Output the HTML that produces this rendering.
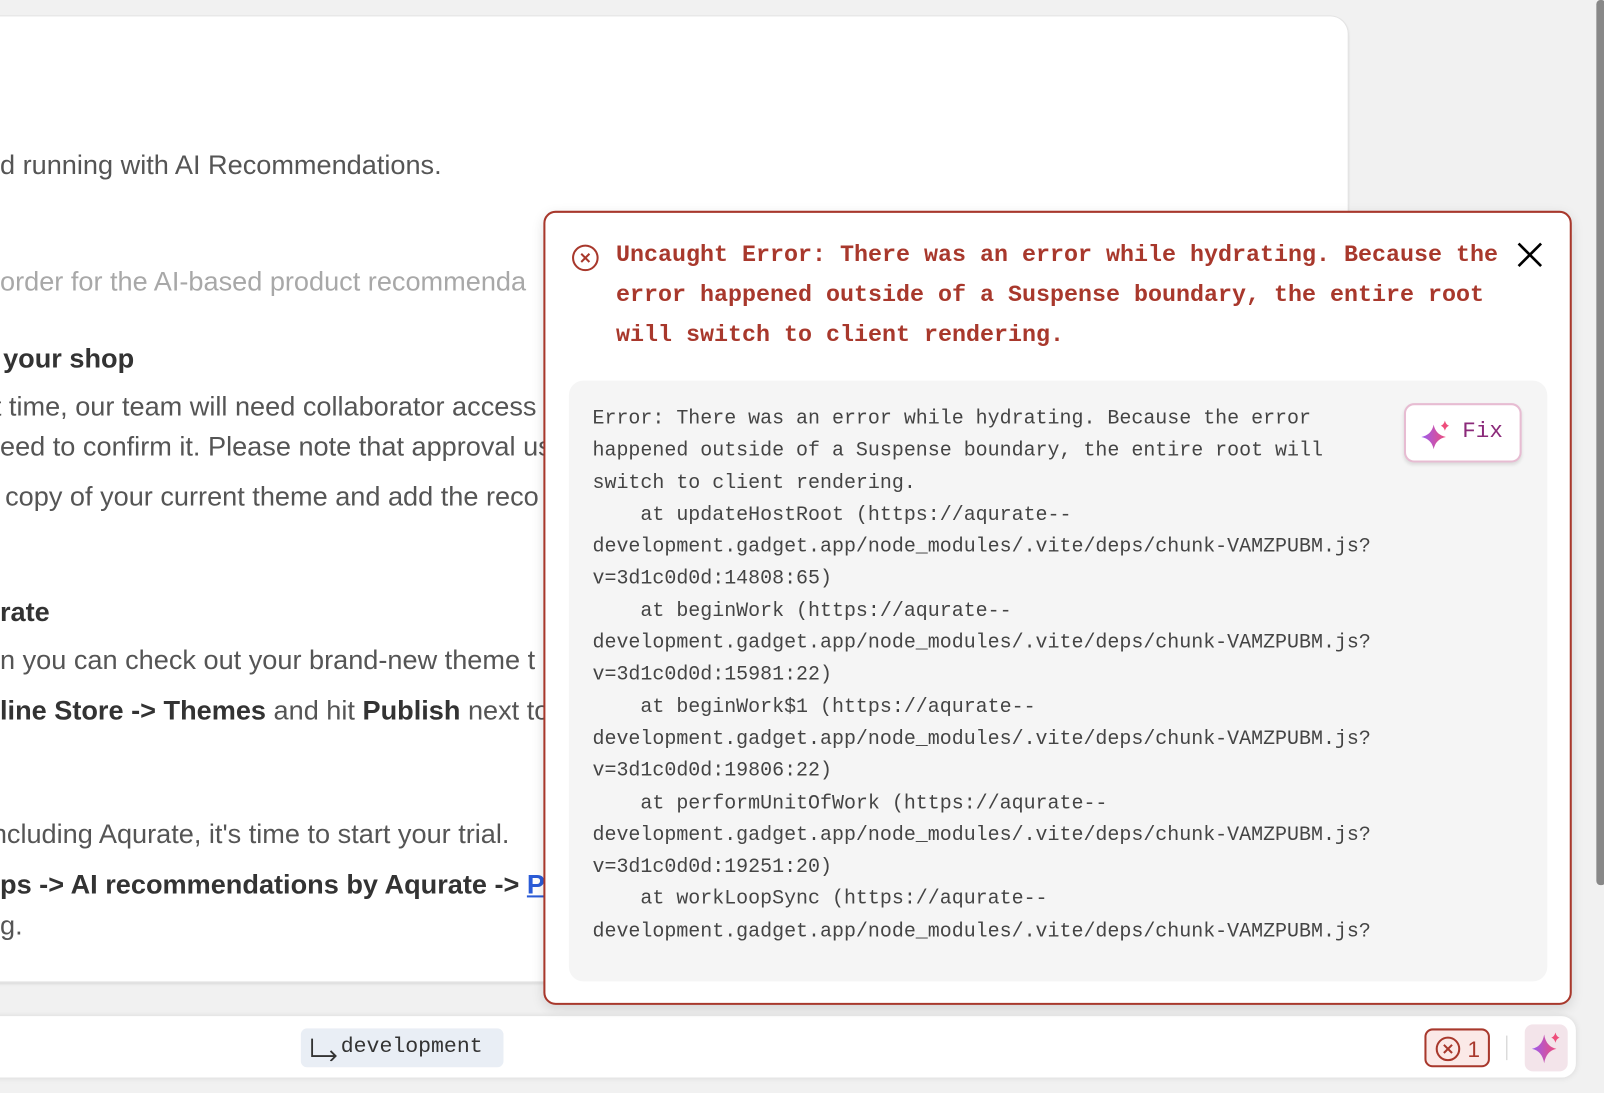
<!DOCTYPE html>
<html><head><meta charset="utf-8"><style>
*{margin:0;padding:0;box-sizing:border-box}
body{width:1604px;height:1092px;background:#f1f1f1;position:relative;overflow:hidden;font-family:"Liberation Sans",sans-serif}
.wrap{position:absolute;left:0;top:0;width:1568px;height:1068px;transform:scale(1.0233);transform-origin:0 0}
.card{position:absolute;left:-20px;top:15px;width:1338px;height:945px;background:#fff;border:1px solid #e3e3e3;border-radius:0 18px 0 0;box-shadow:0 2px 2px rgba(0,0,0,.08)}
.t{position:absolute;left:0;font-size:26.5px;color:#555;white-space:nowrap}
.b{font-weight:bold;color:#333}
.scroll{position:absolute;left:1560px;top:0;width:9px;height:865px;background:#888;border-radius:4px}
.bar{position:absolute;left:-20px;top:993px;width:1560px;height:60px;background:#fff;border-radius:0 14px 14px 0;box-shadow:0 0 6px rgba(0,0,0,.1)}
.panel{position:absolute;left:531px;top:206px;width:1005px;height:776px;background:#fff;border:2px solid #a8382c;border-radius:12px;box-shadow:0 4px 12px rgba(0,0,0,.12)}
.title{position:absolute;left:69px;top:22px;font-family:"Liberation Mono",monospace;font-weight:bold;font-size:22.8px;line-height:39px;color:#a8382c;white-space:pre}
.code{position:absolute;left:23px;top:164px;width:956px;height:587px;background:#f5f5f5;border-radius:14px;overflow:hidden}
.code pre{position:absolute;left:23px;top:22px;font-family:"Liberation Mono",monospace;font-size:19.5px;line-height:31.3px;color:#444}
.fix{position:absolute;left:816px;top:22px;width:115px;height:58px;background:#fff;border:2px solid #e7bcd2;border-radius:10px;box-shadow:0 2px 3px rgba(0,0,0,.1);font-family:"Liberation Mono",monospace;font-size:22px;color:#8b2a7a;padding:13px 0 0 55px}
</style></head><body>
<div class="wrap">
<div class="scroll"></div>
<div class="card"></div>
<div class="t" style="top:146px">d running with AI Recommendations.</div>
<div class="t" style="top:260px;color:#a8a8a8">order for the AI-based product recommenda</div>
<div class="t b" style="top:335px;left:3px">your shop</div>
<div class="t" style="top:382px;left:-6px">t time, our team will need collaborator access</div>
<div class="t" style="top:421px">eed to confirm it. Please note that approval us</div>
<div class="t" style="top:470px;left:5px">copy of your current theme and add the reco</div>
<div class="t b" style="top:583px">rate</div>
<div class="t" style="top:630px">n you can check out your brand-new theme t</div>
<div class="t" style="top:679px"><span class="b">line Store -&gt; Themes</span> and hit <span class="b">Publish</span> next to</div>
<div class="t" style="top:800px;left:-8px">ncluding Aqurate, it's time to start your trial.</div>
<div class="t b" style="top:849px">ps -&gt; AI recommendations by Aqurate -&gt; <span style="color:#2a5bd7;text-decoration:underline">P</span></div>
<div class="t" style="top:889px">g.</div>
<div class="bar"></div>
<div style="position:absolute;left:294px;top:1005px;width:198px;height:38px;background:#e9eef5;border-radius:6px;font-family:'Liberation Mono',monospace;font-size:21px;color:#333;padding:7px 0 0 39px"><svg style="position:absolute;left:9px;top:8px" width="28" height="24" viewBox="0 0 28 24"><path d="M2 2V19H25M20 14l5 5-5 5" fill="none" stroke="#333" stroke-width="1.8"/></svg>development</div>
<div style="position:absolute;left:1392px;top:1005px;width:64px;height:38px;border:2px solid #a8382c;background:#fbe9e7;border-radius:8px;color:#a8382c;font-size:22px;padding:5px 0 0 8px"><svg width="26" height="26" viewBox="0 0 26 26" style="vertical-align:-5px"><circle cx="13" cy="13" r="11" fill="none" stroke="#a8382c" stroke-width="2"/><path d="M9 9l8 8M17 9l-8 8" stroke="#a8382c" stroke-width="2"/></svg> 1</div>
<div style="position:absolute;left:1472px;top:1012px;width:1px;height:24px;background:#ccc"></div>
<div style="position:absolute;left:1490px;top:1001px;width:42px;height:46px;background:#f3e4ea;border-radius:8px"><svg width="42" height="46" viewBox="0 0 42 46"><defs><linearGradient id="g2" x1="0" x2="1"><stop offset="0" stop-color="#9b5cf0"/><stop offset="1" stop-color="#ee4d7b"/></linearGradient></defs><path d="M19 10 Q21 22 31 24 Q21 26 19 38 Q17 26 7 24 Q17 22 19 10Z" fill="url(#g2)"/><path d="M30 8 Q31 12 34 13 Q31 14 30 18 Q29 14 26 13 Q29 12 30 8Z" fill="#ee4d7b"/></svg></div>
<div class="panel">
<svg style="position:absolute;left:25px;top:30px" width="28" height="28" viewBox="0 0 28 28"><circle cx="14" cy="14" r="12" fill="none" stroke="#a8382c" stroke-width="2"/><path d="M10 10l8 8M18 10l-8 8" stroke="#a8382c" stroke-width="2"/></svg>
<div class="title">Uncaught Error: There was an error while hydrating. Because the
error happened outside of a Suspense boundary, the entire root
will switch to client rendering.</div>
<svg style="position:absolute;left:949px;top:28px" width="26" height="26" viewBox="0 0 26 26"><path d="M2 2l22 22M24 2L2 24" stroke="#000" stroke-width="2.6"/></svg>
<div class="code"><pre>Error: There was an error while hydrating. Because the error
happened outside of a Suspense boundary, the entire root will
switch to client rendering.
    at updateHostRoot (https://aqurate--
development.gadget.app/node_modules/.vite/deps/chunk-VAMZPUBM.js?
v=3d1c0d0d:14808:65)
    at beginWork (https://aqurate--
development.gadget.app/node_modules/.vite/deps/chunk-VAMZPUBM.js?
v=3d1c0d0d:15981:22)
    at beginWork$1 (https://aqurate--
development.gadget.app/node_modules/.vite/deps/chunk-VAMZPUBM.js?
v=3d1c0d0d:19806:22)
    at performUnitOfWork (https://aqurate--
development.gadget.app/node_modules/.vite/deps/chunk-VAMZPUBM.js?
v=3d1c0d0d:19251:20)
    at workLoopSync (https://aqurate--
development.gadget.app/node_modules/.vite/deps/chunk-VAMZPUBM.js?</pre>
<div class="fix"><svg style="position:absolute;left:14px;top:13px" width="32" height="32" viewBox="0 0 32 32"><defs><linearGradient id="g1" x1="0" x2="1"><stop offset="0" stop-color="#9b5cf0"/><stop offset="1" stop-color="#ee4d7b"/></linearGradient></defs><path d="M13 6 Q15 16 25 18 Q15 20 13 30 Q11 20 1 18 Q11 16 13 6Z" fill="url(#g1)"/><path d="M24 2 Q25 6 28 7 Q25 8 24 12 Q23 8 20 7 Q23 6 24 2Z" fill="#ee4d7b"/></svg>Fix</div>
</div>
</div>
</div>
</body></html>
